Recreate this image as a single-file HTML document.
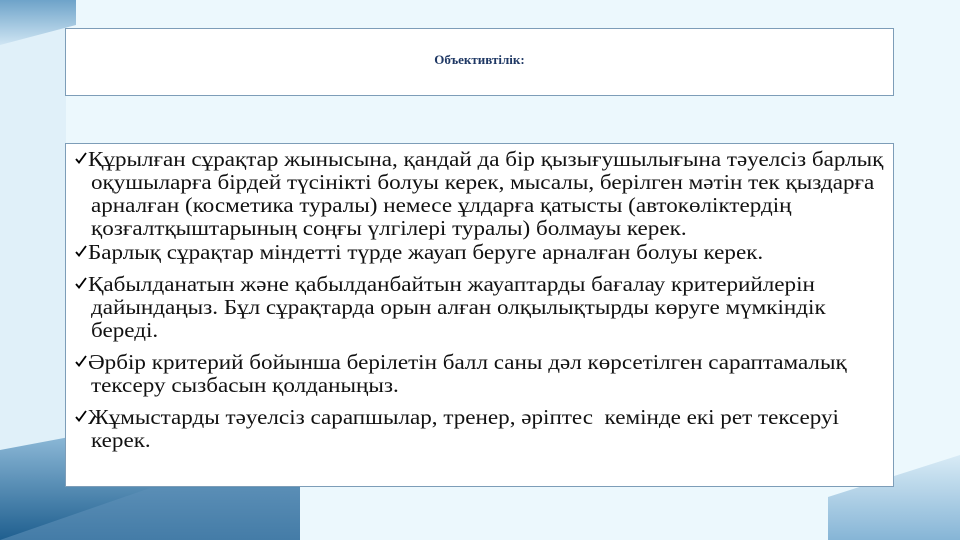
<!DOCTYPE html>
<html><head><meta charset="utf-8"><style>
html,body{margin:0;padding:0}
body{width:960px;height:540px;position:relative;overflow:hidden;background:#ecf8fd;font-family:"Liberation Serif",serif}
.box{position:absolute;background:#fff;border:1px solid #7d9db8}
.t{position:absolute;left:0;right:0;top:23px;text-align:center;font-weight:bold;font-size:13px;color:#1f3864}
.l{position:absolute;white-space:nowrap;font-size:21px;line-height:23px;color:#111;transform-origin:0 0;transform:scaleX(1.1)}
.c{position:absolute;left:75px;width:12px;height:12px}
</style></head><body>
<svg width="960" height="540" style="position:absolute;left:0;top:0">
<defs>
<linearGradient id="g1" x1="0" y1="0" x2="0" y2="1"><stop offset="0" stop-color="#9dc6e2"/><stop offset="1" stop-color="#1f5f8f"/></linearGradient>
<linearGradient id="g2" x1="0" y1="0" x2="0" y2="1"><stop offset="0" stop-color="#6ea3c9"/><stop offset="1" stop-color="#cfe5f3"/></linearGradient>
<linearGradient id="g3" x1="0" y1="0" x2="0" y2="1"><stop offset="0" stop-color="#d8ebf6"/><stop offset="1" stop-color="#86b5d6"/></linearGradient>
</defs>
<rect x="0" y="0" width="66" height="540" fill="#e0f0f9"/>
<polygon points="0,0 76,0 76,25 0,45" fill="url(#g2)"/>
<polygon points="0,450 160,420 300,420 300,540 0,540" fill="url(#g1)"/>
<polygon points="0,540 150,488 300,488 300,540" fill="#5d8fb7" opacity="0.6"/>
<polygon points="828,497 960,455 960,540 828,540" fill="url(#g3)"/>
</svg>
<div class="box" style="left:65px;top:28px;width:827px;height:66px"><div class="t">Объективтілік:</div></div>
<div class="box" style="left:65px;top:143px;width:827px;height:342px"></div>
<svg class="c" style="top:152px" viewBox="0 0 12 12"><path d="M1 7 L4 10.5 L11 1" fill="none" stroke="#000" stroke-width="1.8"/></svg>
<div class="l" style="left:88px;top:148px">Құрылған сұрақтар жынысына, қандай да бір қызығушылығына тәуелсіз барлық</div>
<div class="l" style="left:91px;top:171px">оқушыларға бірдей түсінікті болуы керек, мысалы, берілген мәтін тек қыздарға</div>
<div class="l" style="left:91px;top:194px">арналған (косметика туралы) немесе ұлдарға қатысты (автокөліктердің</div>
<div class="l" style="left:91px;top:217px">қозғалтқыштарының соңғы үлгілері туралы) болмауы керек.</div>
<svg class="c" style="top:245px" viewBox="0 0 12 12"><path d="M1 7 L4 10.5 L11 1" fill="none" stroke="#000" stroke-width="1.8"/></svg>
<div class="l" style="left:88px;top:241px">Барлық сұрақтар міндетті түрде жауап беруге арналған болуы керек.</div>
<svg class="c" style="top:277px" viewBox="0 0 12 12"><path d="M1 7 L4 10.5 L11 1" fill="none" stroke="#000" stroke-width="1.8"/></svg>
<div class="l" style="left:88px;top:273px">Қабылданатын және қабылданбайтын жауаптарды бағалау критерийлерін</div>
<div class="l" style="left:91px;top:296px">дайындаңыз. Бұл сұрақтарда орын алған олқылықтырды көруге мүмкіндік</div>
<div class="l" style="left:91px;top:319px">береді.</div>
<svg class="c" style="top:355px" viewBox="0 0 12 12"><path d="M1 7 L4 10.5 L11 1" fill="none" stroke="#000" stroke-width="1.8"/></svg>
<div class="l" style="left:88px;top:351px">Әрбір критерий бойынша берілетін балл саны дәл көрсетілген сараптамалық</div>
<div class="l" style="left:91px;top:374px">тексеру сызбасын қолданыңыз.</div>
<svg class="c" style="top:410px" viewBox="0 0 12 12"><path d="M1 7 L4 10.5 L11 1" fill="none" stroke="#000" stroke-width="1.8"/></svg>
<div class="l" style="left:88px;top:406px">Жұмыстарды тәуелсіз сарапшылар, тренер, әріптес&nbsp; кемінде екі рет тексеруі</div>
<div class="l" style="left:91px;top:429px">керек.</div>
</body></html>
